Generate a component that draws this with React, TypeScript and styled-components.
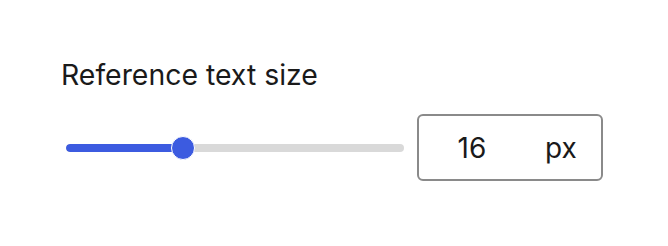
import * as React from 'react';
import styled, { createGlobalStyle } from 'styled-components';

const GlobalStyle = createGlobalStyle`
    html, body {
        margin: 0;
        padding: 0;
        background: #FFFFFF;
    }
    body {
        font-family: Inter, "Noto Sans", "Liberation Sans", sans-serif;
        color: #1C1C1C;
    }
`

const Panel = styled.div`
    padding: 58px 0 0 61px;
    display: flex;
    flex-direction: column;
`

const Title = styled.div`
    font-size: 28.4px;
    line-height: 34px;
    font-weight: 400;
    color: #1A1A1A;
`

const Row = styled.div`
    margin-top: 22px;
    display: flex;
    align-items: center;
    gap: 13px;
`

const SliderView = styled.div`
    position: relative;
    margin-left: 5px;
    width: 338px;
    height: 24px;
    display: flex;
    align-items: center;
`

const Track = styled.div`
    position: relative;
    width: 100%;
    height: 8px;
    border-radius: 4px;
    background-color: #D9D9D9;
    overflow: hidden;
`

const Fill = styled.div`
    height: 100%;
    border-radius: 4px;
    background-color: #3C5BE0;
`

const Thumb = styled.div`
    position: absolute;
    top: 0;
    width: 24px;
    height: 24px;
    box-sizing: border-box;
    margin-left: -12px;
    border-radius: 50%;
    border: 1.5px solid #FFFFFF;
    background-color: #3C5BE0;
`

const ValueBox = styled.div`
    box-sizing: border-box;
    width: 186px;
    height: 67px;
    border: 2px solid #8A8A8A;
    border-radius: 6px;
    display: flex;
    align-items: center;
    font-size: 28px;
    line-height: 34px;
    color: #1A1A1A;
`

const Number = styled.span`
    width: 106px;
    text-align: center;
`

const Unit = styled.span`
    margin-left: 20px;
`

const THUMB = 24;
const WIDTH = 338;

const Slider = ({ value, min, max }: { value: number, min: number, max: number }) => {
    const ratio = (value - min) / (max - min);
    const pos = THUMB / 2 + ratio * (WIDTH - THUMB);
    return (
        <SliderView>
            <Track>
                <Fill style={{ width: pos }} />
            </Track>
            <Thumb style={{ left: pos }} />
        </SliderView>
    );
}

export default function App() {
    const size = 16;
    return (
        <>
            <GlobalStyle />
            <Panel>
                <Title>Reference text size</Title>
                <Row>
                    <Slider value={size} min={8} max={32} />
                    <ValueBox>
                        <Number>{size}</Number>
                        <Unit>px</Unit>
                    </ValueBox>
                </Row>
            </Panel>
        </>
    );
}
